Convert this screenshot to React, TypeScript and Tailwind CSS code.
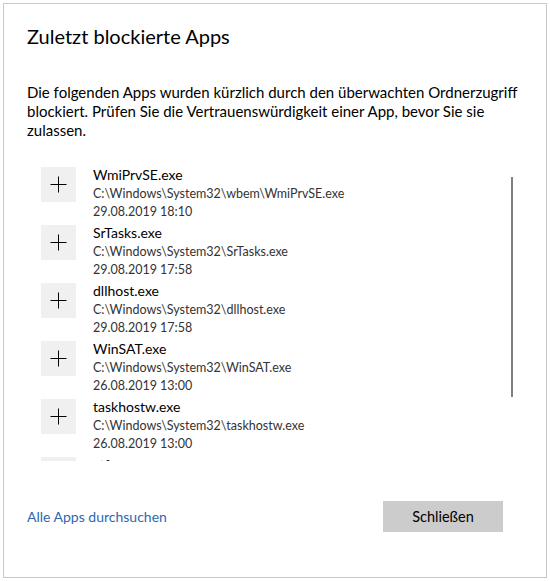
const apps = [
  { name: "WmiPrvSE.exe", path: "C:\\Windows\\System32\\wbem\\WmiPrvSE.exe", date: "29.08.2019 18:10" },
  { name: "SrTasks.exe", path: "C:\\Windows\\System32\\SrTasks.exe", date: "29.08.2019 17:58" },
  { name: "dllhost.exe", path: "C:\\Windows\\System32\\dllhost.exe", date: "29.08.2019 17:58" },
  { name: "WinSAT.exe", path: "C:\\Windows\\System32\\WinSAT.exe", date: "26.08.2019 13:00" },
  { name: "taskhostw.exe", path: "C:\\Windows\\System32\\taskhostw.exe", date: "26.08.2019 13:00" },
]

function PlusBox() {
  return (
    <div className="mt-[2px] flex h-[35px] w-[35px] shrink-0 items-center justify-center bg-[#f0f0f0]">
      <svg width="17" height="17" viewBox="0 0 17 17">
        <path d="M8.5 0.5v16M0.5 8.5h16" stroke="#000" strokeWidth="1" fill="none" />
      </svg>
    </div>
  )
}

function AppRow({ name, path, date }: { name: string; path?: string; date?: string }) {
  return (
    <div className="flex h-[58px] shrink-0 items-start gap-[17px] pl-[14px]">
      <PlusBox />
      <div className="flex flex-col">
        <span className="text-[14px] leading-[20px] text-black">{name}</span>
        {path && <span className="text-[12.5px] leading-[18px] text-[#333]">{path}</span>}
        {date && <span className="text-[12.5px] leading-[18px] text-[#333]">{date}</span>}
      </div>
    </div>
  )
}

export default function App() {
  return (
    <div className="h-[581px] w-[550px] bg-white pl-[3px] pt-[3px] font-['Lato','Noto_Sans',sans-serif]">
      <div className="flex h-[575px] w-[544px] flex-col border border-[#c8c8c8] bg-white pl-[23px] pr-[20px]">
        <h1 className="mt-[18px] text-[20px] font-normal leading-[28px] text-black">Zuletzt blockierte Apps</h1>
        <p className="mt-[33px] text-[15px] leading-[19px] text-black">
          Die folgenden Apps wurden kürzlich durch den überwachten Ordnerzugriff blockiert. Prüfen Sie die Vertrauenswürdigkeit einer App, bevor Sie sie zulassen.
        </p>

        <div className="relative mt-[25px] h-[296px] overflow-hidden">
          <div className="flex flex-col">
            {apps.map((a) => (
              <AppRow key={a.name} {...a} />
            ))}
            {/* partly scrolled-out row */}
            <AppRow name="ctfmon.exe" />
          </div>
          {/* scrollbar thumb */}
          <div className="absolute right-[13px] top-[12px] h-[220px] w-[2px] bg-[#808080]" />
        </div>

        <div className="mt-[40px] flex items-center justify-between pr-[23px]">
          <a className="text-[14px] text-[#2e67b1]" href="#">
            Alle Apps durchsuchen
          </a>
          <button className="h-[31px] w-[120px] bg-[#cccccc] text-[14.5px] text-black">Schließen</button>
        </div>
      </div>
    </div>
  )
}
